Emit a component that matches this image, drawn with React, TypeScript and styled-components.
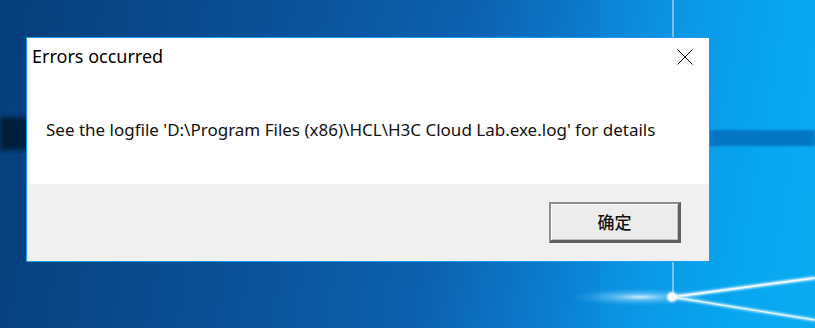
import React from "react";
import styled, { createGlobalStyle } from "styled-components";

const Global = createGlobalStyle`
  html, body { margin: 0; padding: 0; }
  body { width: 815px; height: 328px; overflow: hidden; }
`;

const Desktop = styled.div`
  position: relative;
  width: 815px;
  height: 328px;
  overflow: hidden;
  padding: 37px 0 0 26px;
  box-sizing: border-box;
  background: linear-gradient(100deg, #063e7a 0%, #0a4f95 30%, #0c62b0 55%, #0b7fd2 70%, #0797e6 80%, #04a6ef 90%, #09acf2 100%);
`;

const Wallpaper = styled.svg`
  position: absolute;
  left: 0;
  top: 0;
  width: 815px;
  height: 328px;
  pointer-events: none;
`;

const Dialog = styled.div`
  position: relative;
  z-index: 1;
  width: 684px;
  height: 225px;
  box-sizing: border-box;
  border: 1px solid #1a9cf0;
  background: #ffffff;
  display: flex;
  flex-direction: column;
  font-family: "Noto Sans", "Open Sans", sans-serif;
  color: #000;
`;

const TitleBar = styled.div`
  height: 38px;
  display: flex;
  align-items: flex-start;
  justify-content: space-between;
  padding: 0 16px 0 5px;
`;

const Title = styled.div`
  font-size: 18px;
  line-height: 20px;
  margin-top: 8px;
`;

const CloseButton = styled.div`
  width: 16px;
  height: 16px;
  margin-top: 11px;
  display: flex;
`;

const Content = styled.div`
  flex: 0 0 108px;
  display: flex;
  align-items: center;
  padding-left: 19px;
  padding-bottom: 1px;
  box-sizing: border-box;
`;

const Message = styled.div`
  font-size: 17px;
  line-height: 20px;
  color: #111;
  white-space: nowrap;
  letter-spacing: 0px;
`;

const Footer = styled.div`
  flex: 1;
  background: #f0f0f0;
  display: flex;
  align-items: center;
  justify-content: flex-end;
  padding-right: 28px;
`;

const Button = styled.div`
  width: 132px;
  height: 41px;
  box-sizing: border-box;
  border-top: 2px solid #8e8e8e;
  border-left: 2px solid #8e8e8e;
  border-right: 3px solid #5f5f5f;
  border-bottom: 3px solid #5f5f5f;
  background: #ececec;
  box-shadow: inset 1px 1px 0 #ffffff, inset -1px -1px 0 #bdbdbd;
  display: flex;
  align-items: center;
  justify-content: center;
  font-family: "Noto Sans CJK SC", sans-serif;
  font-size: 17px;
  font-weight: 500;
  color: #141414;
  padding-bottom: 1px;
`;

export default function App() {
  return (
    <>
      <Global />
      <Desktop>
        <Wallpaper viewBox="0 0 815 328">
          <defs>
            <linearGradient id="bandL" x1="0" x2="1" y1="0" y2="0">
              <stop offset="0" stopColor="#021b38" stopOpacity="1" />
              <stop offset="0.5" stopColor="#03264c" stopOpacity="0.7" />
              <stop offset="1" stopColor="#03305e" stopOpacity="0" />
            </linearGradient>
            <radialGradient id="glow" cx="0.5" cy="0.5" r="0.5">
              <stop offset="0" stopColor="#e8f7ff" stopOpacity="0.9" />
              <stop offset="0.4" stopColor="#9fdcff" stopOpacity="0.45" />
              <stop offset="1" stopColor="#4cb8f5" stopOpacity="0" />
            </radialGradient>
            <filter id="blur" x="-20%" y="-20%" width="140%" height="140%">
              <feGaussianBlur stdDeviation="1.2" />
            </filter>
            <filter id="blur2" x="-20%" y="-50%" width="140%" height="200%">
              <feGaussianBlur stdDeviation="2" />
            </filter>
          </defs>
          <rect x="0" y="117" width="200" height="33" fill="url(#bandL)" filter="url(#blur2)" />
          <rect x="690" y="130" width="125" height="16" fill="#0066b4" opacity="0.85" filter="url(#blur)" />
          <rect x="600" y="0" width="215" height="328" fill="#1aa8f0" opacity="0.15" />
          <ellipse cx="640" cy="297" rx="70" ry="9" fill="url(#glow)" />
          <line x1="673" y1="0" x2="673" y2="297" stroke="#9fdcff" strokeWidth="3" opacity="0.8" filter="url(#blur)" />
          <line x1="673" y1="0" x2="673" y2="297" stroke="#d8f2ff" strokeWidth="1.2" opacity="0.85" />
          <path d="M672 297 L815 278" stroke="#d7f2ff" strokeWidth="3.5" filter="url(#blur)" />
          <path d="M672 297 L815 278" stroke="#f4fbff" strokeWidth="1.4" />
          <path d="M672 297 L815 320" stroke="#c6ecff" strokeWidth="3" filter="url(#blur)" />
          <path d="M672 297 L815 320" stroke="#eef9ff" strokeWidth="1.1" />
          <circle cx="672" cy="297" r="5" fill="#ffffff" filter="url(#blur)" />
        </Wallpaper>
        <Dialog>
          <TitleBar>
            <Title>Errors occurred</Title>
            <CloseButton>
              <svg width="16" height="16" viewBox="0 0 16 16">
                <path d="M0.5 0.5 L15.5 15.5 M15.5 0.5 L0.5 15.5" stroke="#000" strokeWidth="1" fill="none" />
              </svg>
            </CloseButton>
          </TitleBar>
          <Content>
            <Message>See the logfile 'D:\Program Files (x86)\HCL\H3C Cloud Lab.exe.log' for details</Message>
          </Content>
          <Footer>
            <Button>确定</Button>
          </Footer>
        </Dialog>
      </Desktop>
    </>
  );
}
